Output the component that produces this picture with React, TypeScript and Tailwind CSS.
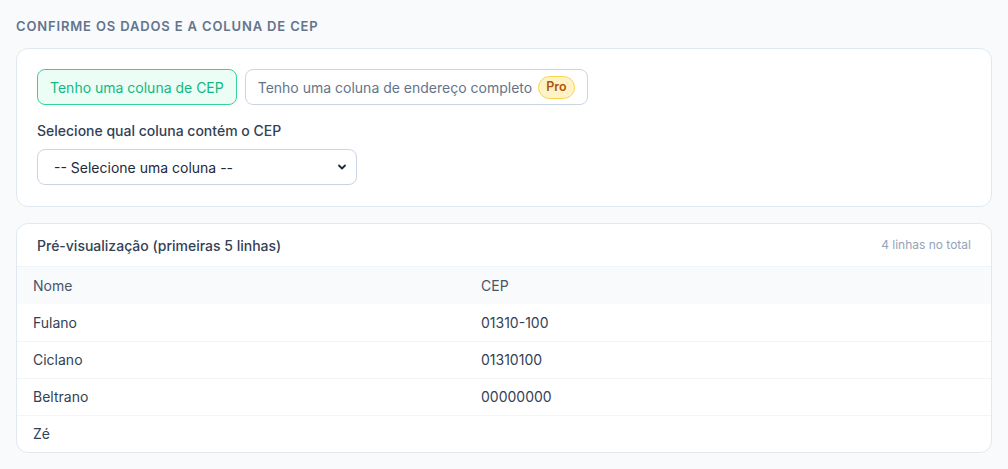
import React from 'react';

const rows = [
  { nome: 'Fulano', cep: '01310-100' },
  { nome: 'Ciclano', cep: '01310100' },
  { nome: 'Beltrano', cep: '00000000' },
  { nome: 'Zé', cep: '' },
];

const App: React.FC = () => {
  return (
    <div
      className="min-h-[469px] bg-[#f8fafc] px-4 pt-[17px] pb-4"
      style={{ fontFamily: 'Inter, "Noto Sans", sans-serif' }}
    >
      <h2 className="text-[13px] font-semibold uppercase tracking-[0.85px] text-[#64748b] leading-[18px] mb-[13px]">
        Confirme os dados e a coluna de CEP
      </h2>

      <div className="bg-white border border-[#e2e8f0] rounded-xl px-5 pt-5 pb-[21px]">
        <div className="flex gap-2">
          <button className="h-9 px-3 rounded-lg border border-[#34d399] bg-[#ecfdf5] text-[#10b981] text-[14px] font-normal whitespace-nowrap">
            Tenho uma coluna de CEP
          </button>
          <button className="h-9 px-3 rounded-lg border border-[#cbd5e1] bg-white text-[#64748b] text-[14px] font-normal flex items-center gap-[6px] whitespace-nowrap">
            Tenho uma coluna de endereço completo
            <span className="px-[7px] h-[23px] flex items-center rounded-full bg-[#fef3c7] border border-[#fcd34d] text-[#b45309] text-[12.5px] font-semibold">
              Pro
            </span>
          </button>
        </div>

        <label className="block mt-4 text-[14px] font-medium text-[#334155] leading-5">
          Selecione qual coluna contém o CEP
        </label>
        <div className="relative mt-2 w-[320px]">
          <select className="appearance-none w-full h-9 rounded-lg border border-[#cbd5e1] bg-white pl-4 pr-8 text-[14px] text-[#1e293b] outline-none">
            <option>-- Selecione uma coluna --</option>
          </select>
          <svg
            className="pointer-events-none absolute right-[10px] top-1/2 -translate-y-1/2"
            width="10"
            height="10"
            viewBox="0 0 10 10"
            fill="none"
          >
            <path d="M2 3.5 L5 6.5 L8 3.5" stroke="#1e293b" strokeWidth="1.8" strokeLinecap="round" strokeLinejoin="round" />
          </svg>
        </div>
      </div>

      <div className="mt-4 bg-white border border-[#e2e8f0] rounded-xl overflow-hidden">
        <div className="flex items-center justify-between h-[43px] px-5 border-b border-[#f1f5f9]">
          <span className="text-[14px] font-medium text-[#334155]">Pré-visualização (primeiras 5 linhas)</span>
          <span className="text-[12px] text-[#94a3b8]">4 linhas no total</span>
        </div>
        <table className="w-full text-[14px] text-left border-collapse">
          <thead>
            <tr className="bg-[#f8fafc] h-[37px]">
              <th className="w-[448px] px-4 font-normal text-[#475569]">Nome</th>
              <th className="px-4 font-normal text-[#475569]">CEP</th>
            </tr>
          </thead>
          <tbody>
            {rows.map((r, i) => (
              <tr key={r.nome} className={`h-[37px] ${i > 0 ? 'border-t border-[#f1f5f9]' : ''}`}>
                <td className="px-4 text-[#334155]">{r.nome}</td>
                <td className="px-4 text-[#334155]">{r.cep}</td>
              </tr>
            ))}
          </tbody>
        </table>
      </div>
    </div>
  );
};

export default App;
